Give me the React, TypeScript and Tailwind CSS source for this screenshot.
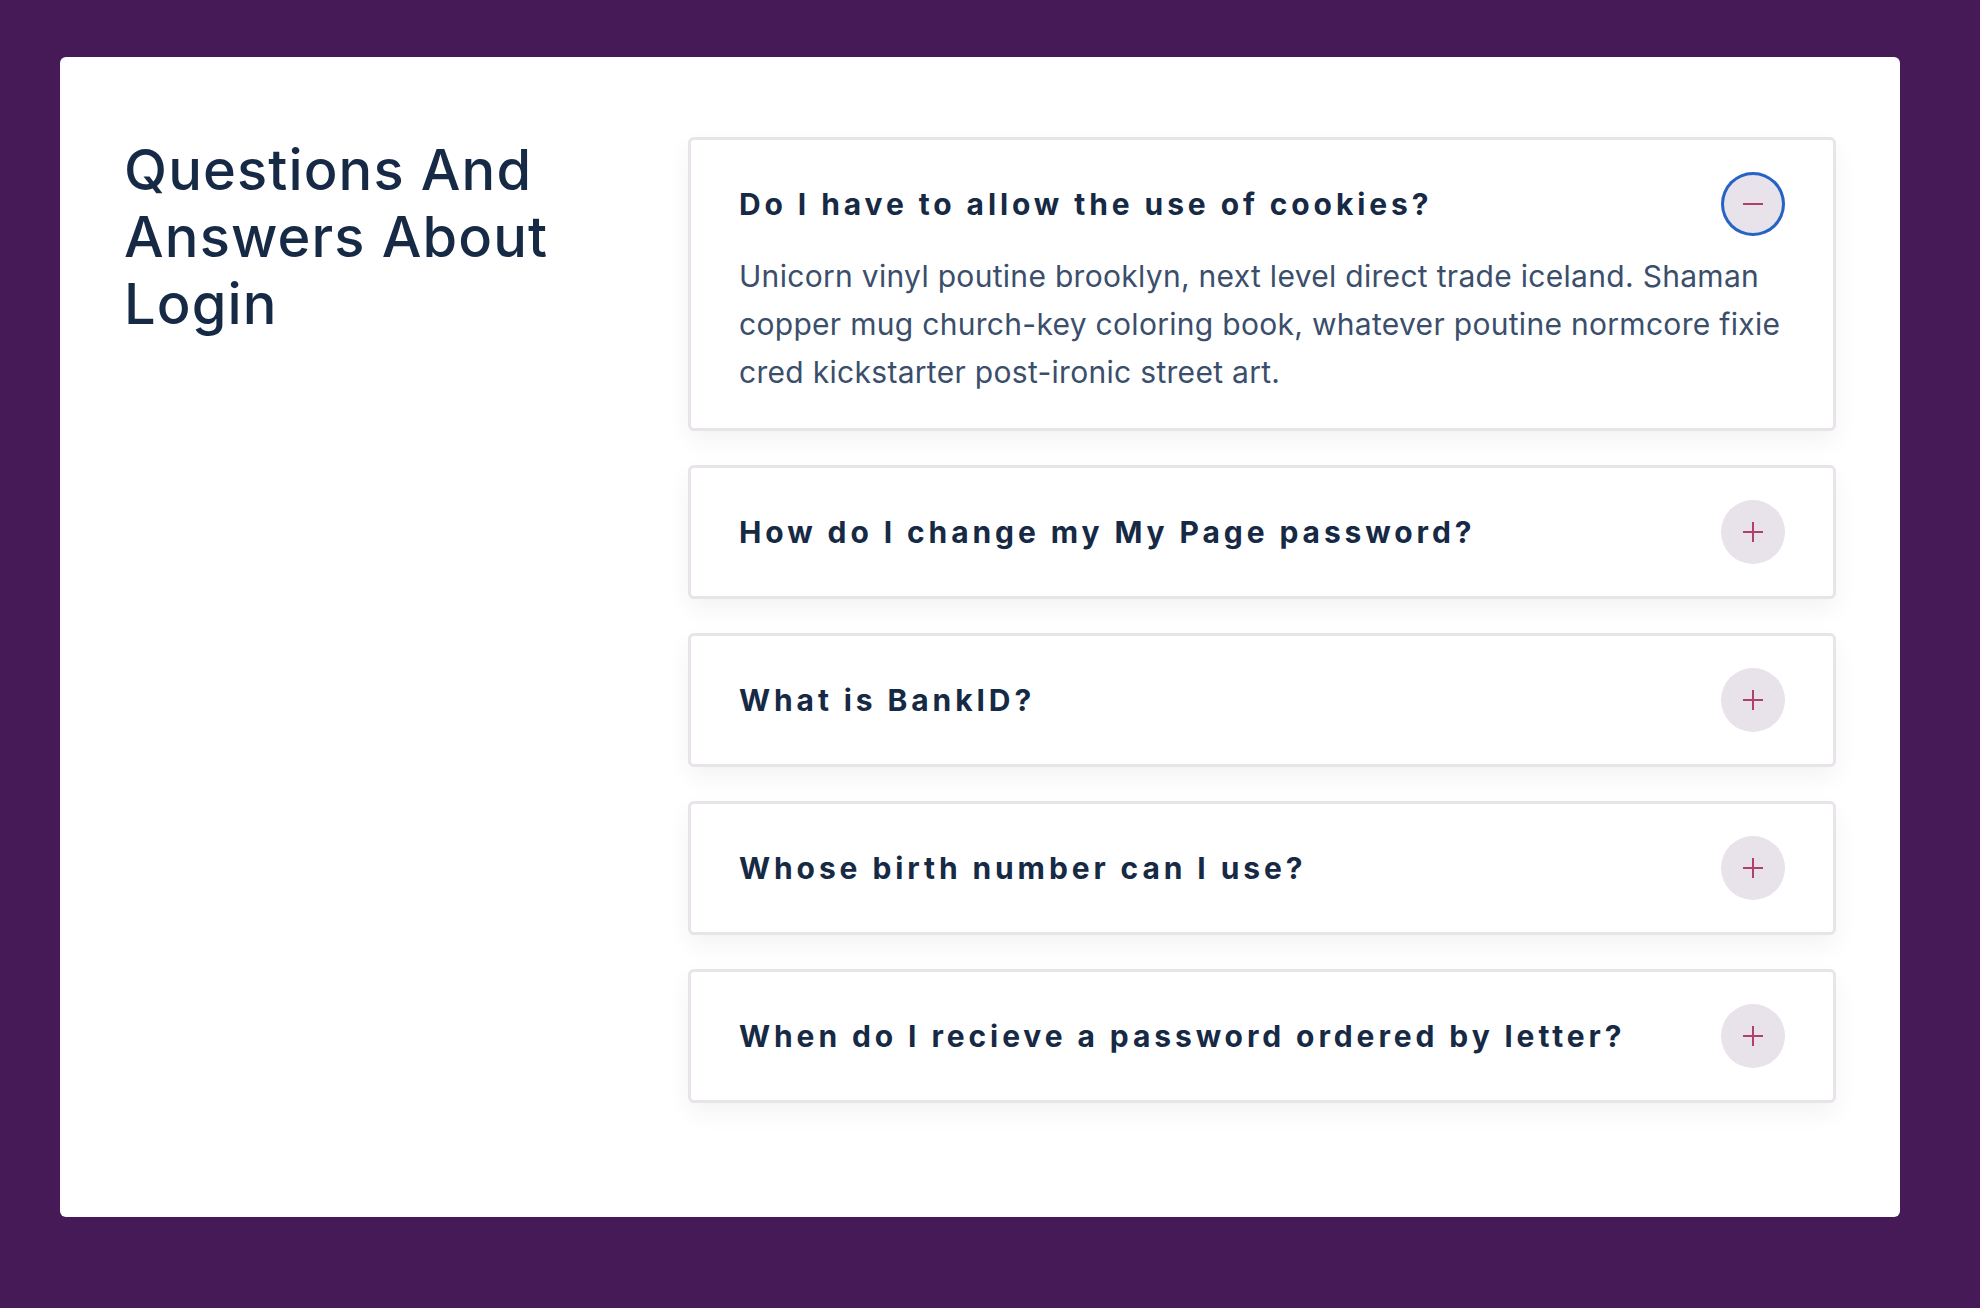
import { useState } from 'react';

const faqs = [
  {
    q: 'Do I have to allow the use of cookies?',
    a: 'Unicorn vinyl poutine brooklyn, next level direct trade iceland. Shaman copper mug church-key coloring book, whatever poutine normcore fixie cred kickstarter post-ironic street art.',
  },
  { q: 'How do I change my My Page password?', a: 'Unicorn vinyl poutine brooklyn, next level direct trade iceland.' },
  { q: 'What is BankID?', a: 'Unicorn vinyl poutine brooklyn, next level direct trade iceland.' },
  { q: 'Whose birth number can I use?', a: 'Unicorn vinyl poutine brooklyn, next level direct trade iceland.' },
  { q: 'When do I recieve a password ordered by letter?', a: 'Unicorn vinyl poutine brooklyn, next level direct trade iceland.' },
];

function Toggle({ open }: { open: boolean }) {
  return (
    <span
      className={`flex h-16 w-16 shrink-0 items-center justify-center rounded-full bg-[#e8e3ea] ${
        open ? 'ring-[3px] ring-inset ring-[#2563c6]' : ''
      }`}
    >
      <svg width="22" height="22" viewBox="0 0 22 22" fill="none" stroke="#b3406a" strokeWidth="2">
        <path d="M1 11h20" />
        {!open && <path d="M11 1v20" />}
      </svg>
    </span>
  );
}

export default function App() {
  const [openIndex, setOpenIndex] = useState<number | null>(0);

  return (
    <div className="min-h-[1308px] bg-[#461a56] pt-[57px] pl-[60px] pr-[80px] pb-[91px] font-['Inter',sans-serif]">
      <div className="flex h-[1160px] rounded-md bg-white px-16 pt-20">
        {/* Heading */}
        <div className="w-[564px] shrink-0">
          <h1 className="text-[56px] font-medium leading-[67px] tracking-[0.02em] text-[#172a45]">
            Questions And Answers About Login
          </h1>
        </div>

        {/* Accordion */}
        <div className="flex flex-1 flex-col gap-[34px]">
          {faqs.map((item, i) => {
            const open = openIndex === i;
            return (
              <div
                key={item.q}
                className="rounded-md border-[3px] border-[#e8e4ea] bg-white px-12 py-8 shadow-[0_10px_25px_rgba(0,0,0,0.05)]"
              >
                <button
                  onClick={() => setOpenIndex(open ? null : i)}
                  className="flex w-full items-center justify-between text-left"
                >
                  <span className="text-[30px] font-bold tracking-[0.13em] text-[#172a45]">{item.q}</span>
                  <Toggle open={open} />
                </button>
                {open && (
                  <p className="mt-[16px] pb-0 text-[30px] leading-[48px] tracking-[0.01em] text-[#3b4e6b]">{item.a}</p>
                )}
              </div>
            );
          })}
        </div>
      </div>
    </div>
  );
}
